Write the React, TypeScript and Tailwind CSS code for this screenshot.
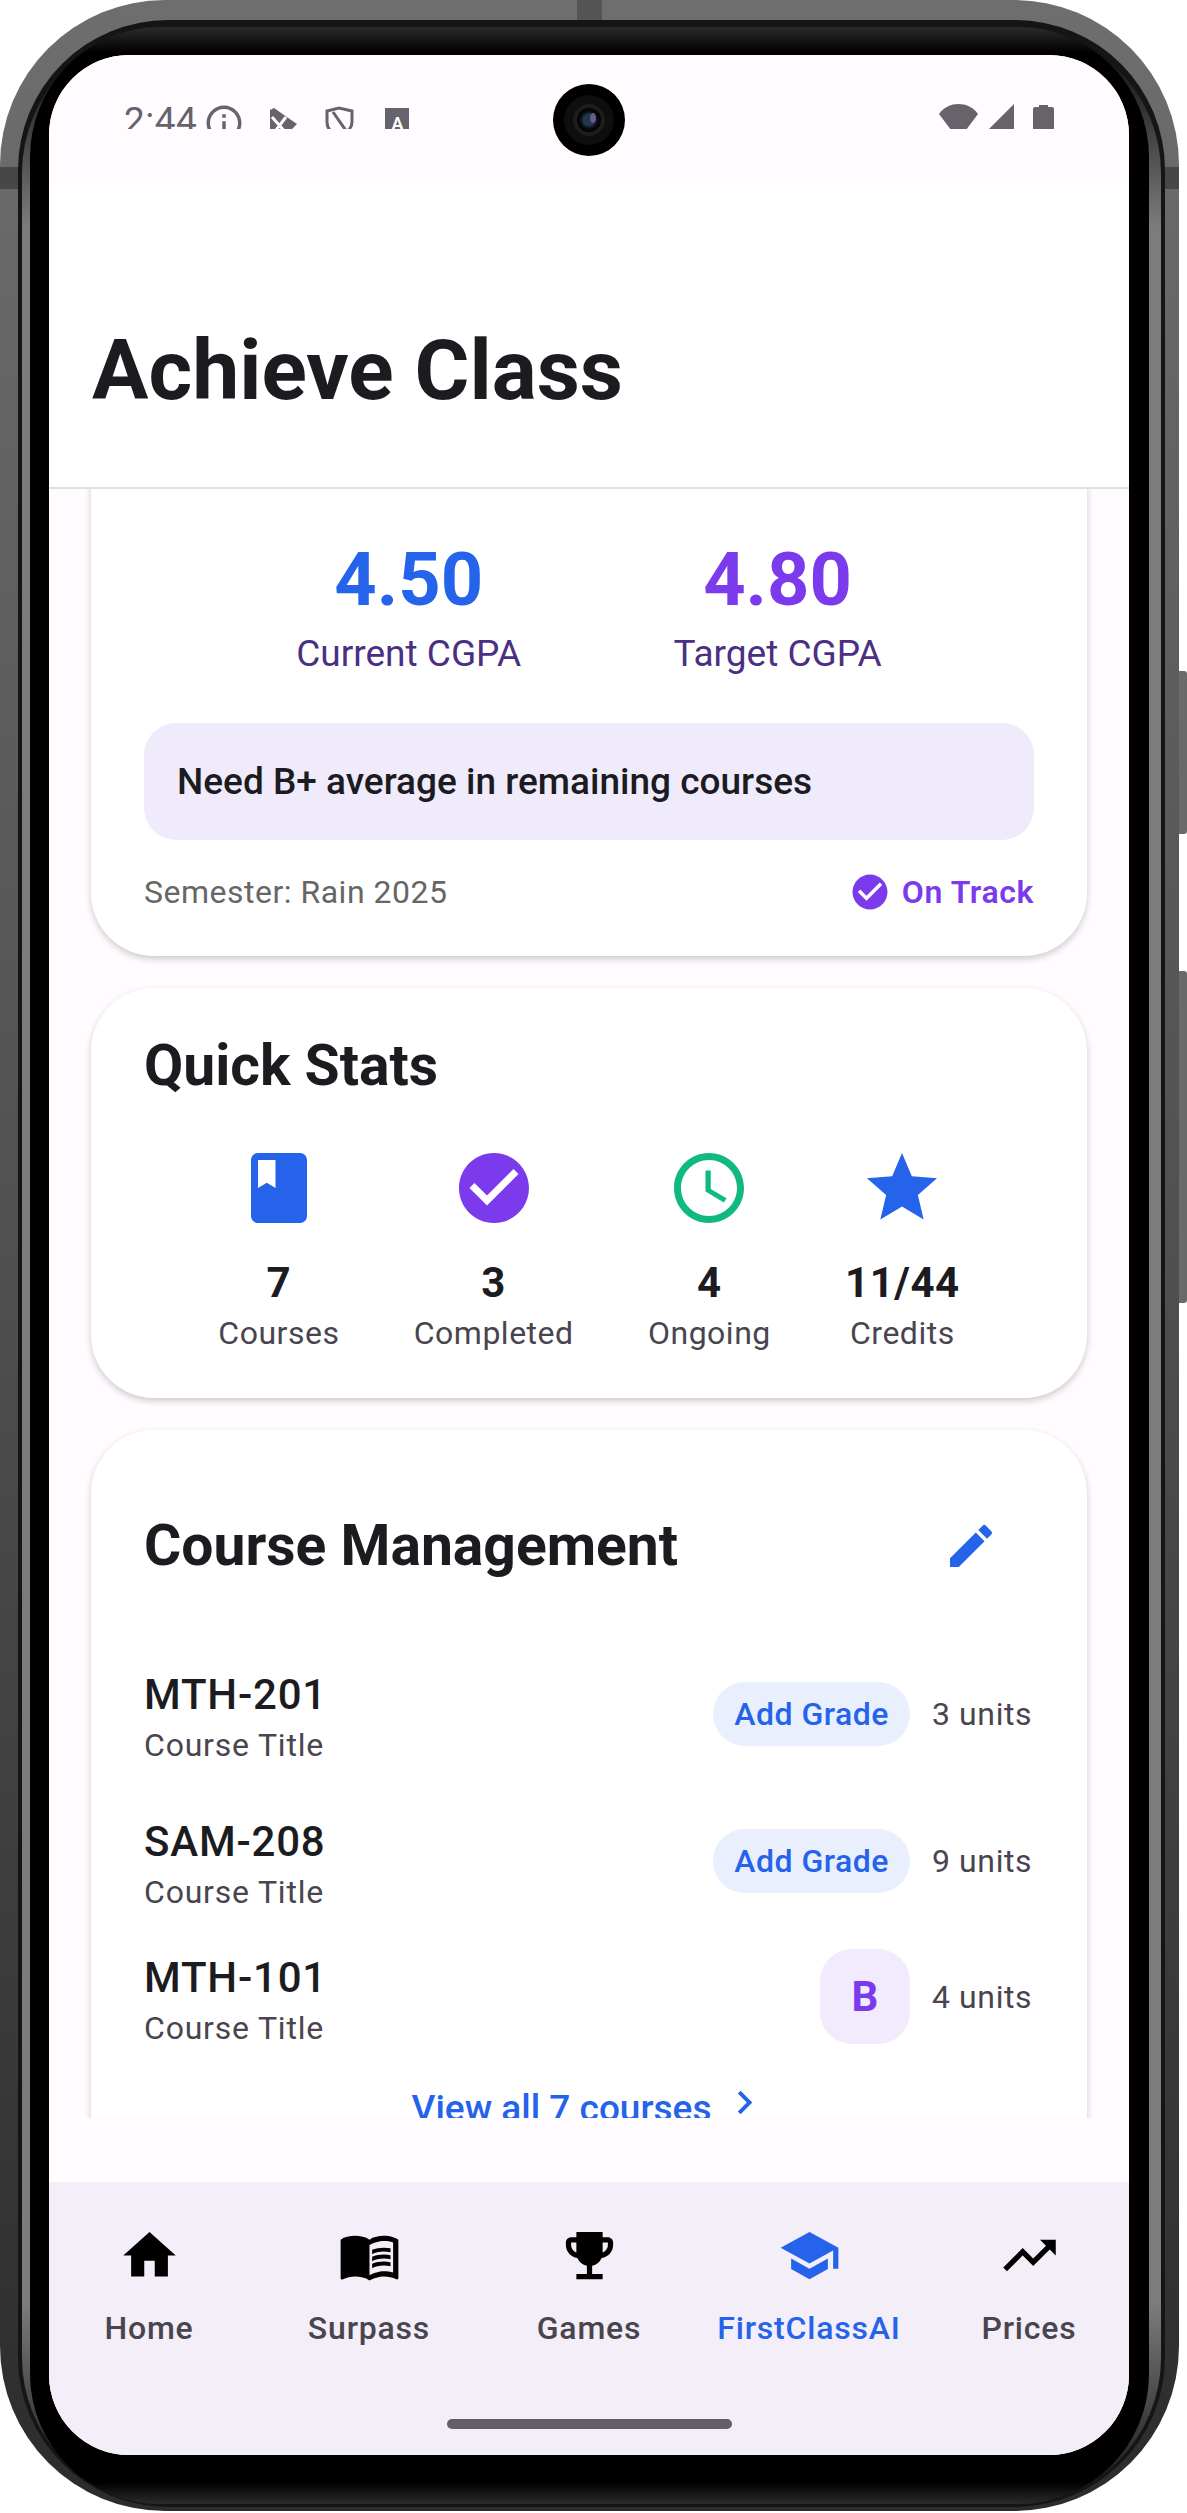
import { MdAccessTime, MdBook, MdCheckCircle, MdChevronRight, MdEdit, MdEmojiEvents, MdHome, MdInfoOutline, MdMenuBook, MdSchool, MdStar, MdTrendingUp } from "react-icons/md";

const stats = [
  { icon: <MdBook size={84} className="text-[#2563eb]" />, value: "7", label: "Courses" },
  { icon: <MdCheckCircle size={84} className="text-[#7c3aed]" />, value: "3", label: "Completed" },
  { icon: <MdAccessTime size={84} className="text-[#10b981]" />, value: "4", label: "Ongoing" },
  { icon: <MdStar size={84} className="text-[#2563eb]" />, value: "11/44", label: "Credits" },
];

const navItems = [
  { icon: MdHome, label: "Home" },
  { icon: MdMenuBook, label: "Surpass" },
  { icon: MdEmojiEvents, label: "Games" },
  { icon: MdSchool, label: "FirstClassAI", active: true },
  { icon: MdTrendingUp, label: "Prices" },
];

const StatusBar = () => (
  <div className="relative h-[130px] shrink-0 bg-[#fffbfe]">
    <div className="flex h-[74px] items-start justify-between overflow-hidden pl-[75px] pr-[75px] pt-[49px]">
      <div className="flex items-start text-[#66646a]">
        <span className="-mt-[8px] text-[37px] leading-[50px] tracking-[0.5px]">2:44</span>
        <MdInfoOutline size={42} className="-mt-[2px] ml-[6px]" />
        <svg viewBox="0 0 27 27" className="ml-[25px] mt-[4px] h-[27px] w-[27px]">
          <path d="M0 2l4-2 10 7 13 9-11 11H0z" fill="currentColor" />
          <path d="M2 9l15 17M16 9L3 26" stroke="#fffbfe" strokeWidth="3" fill="none" />
        </svg>
        <svg viewBox="0 0 29 30" className="ml-[28px] mt-[2px] h-[30px] w-[29px]" fill="none" stroke="currentColor" strokeWidth="3">
          <path d="M2 5l12-3 13 3v11c0 6-5 11-13 13C6 27 2 22 2 16zM8 6l14 20" />
        </svg>
        <span className="ml-[31px] mt-[4px] flex h-[30px] w-[24px] items-start justify-center bg-[#66646a] pt-[5px] text-[17px] font-bold leading-[20px] text-white">
          A
        </span>
      </div>
      <div className="flex items-start text-[#66646a]">
        <svg viewBox="0 0 39 32" className="h-[32px] w-[39px]" fill="currentColor">
          <path d="M0 10C5 3 12 0 19.500 0S34 3 39 10L19.500 36z" />
        </svg>
        <svg viewBox="0 0 25 25" className="ml-[11px] h-[25px] w-[25px]" fill="currentColor">
          <path d="M25 0v25H0z" />
        </svg>
        <svg viewBox="0 0 21 25" className="ml-[19px] h-[25px] w-[21px]" fill="currentColor">
          <path d="M6 3V1h9v2h4a2 2 0 0 1 2 2v20H0V5a2 2 0 0 1 2-2z" />
        </svg>
      </div>
    </div>
    <svg viewBox="0 0 72 72" className="absolute left-[504px] top-[29px] h-[72px] w-[72px]">
      <defs>
        <radialGradient id="lens" cx="50%" cy="50%" r="50%">
          <stop offset="0%" stopColor="#2a2f4a" />
          <stop offset="45%" stopColor="#1d3a50" />
          <stop offset="70%" stopColor="#0b0b10" />
          <stop offset="100%" stopColor="#000000" />
        </radialGradient>
      </defs>
      <circle cx="36" cy="36" r="36" fill="#000000" />
      <circle cx="36" cy="36" r="25" fill="#0e0e0f" />
      <circle cx="36" cy="36" r="16" fill="#1d1d1f" />
      <circle cx="36" cy="36" r="12" fill="url(#lens)" />
      <ellipse cx="40" cy="34" rx="3" ry="5" fill="#6c5a8c" />
    </svg>
  </div>
);

const Header = () => (
  <div className="flex h-[304px] shrink-0 items-start border-b-2 border-[#e0dfe6] bg-white pl-[43px] pt-[136px]">
    <h1 className="text-[84px] font-bold leading-[100px] text-[#1c1b1f]">Achieve Class</h1>
  </div>
);

const CgpaCard = () => (
  <div className="-mt-[60px] shrink-0 rounded-[63px] bg-white px-[53px] pb-[43px] pt-[103px] shadow-[0_3px_7px_rgba(0,0,0,0.2)]">
    <div className="flex justify-evenly">
      <div className="flex flex-col items-center">
        <span className="text-[74px] font-bold leading-[96px] text-[#2563eb]">4.50</span>
        <span className="mt-[1px] text-[37px] leading-[50px] text-[#4a2f82]">Current CGPA</span>
      </div>
      <div className="flex flex-col items-center">
        <span className="text-[74px] font-bold leading-[96px] text-[#7c3aed]">4.80</span>
        <span className="mt-[1px] text-[37px] leading-[50px] text-[#4a2f82]">Target CGPA</span>
      </div>
    </div>
    <div className="mt-[44px] flex h-[117px] items-center rounded-[32px] bg-[#f0ebfb] px-[33px]">
      <span className="text-[37px] font-medium text-[#1c1b1f]">Need B+ average in remaining courses</span>
    </div>
    <div className="mt-[31px] flex h-[42px] items-center justify-between">
      <span className="text-[32px] tracking-[0.5px] text-[#666666]">Semester: Rain 2025</span>
      <div className="flex items-center gap-[11px] text-[#7c3aed]">
        <MdCheckCircle size={42} />
        <span className="text-[32px] font-semibold tracking-[0.6px]">On Track</span>
      </div>
    </div>
  </div>
);

const QuickStats = () => (
  <div className="shrink-0 rounded-[63px] bg-white px-[53px] pb-[44px] pt-[53px] shadow-[0_3px_7px_rgba(0,0,0,0.2)]">
    <h2 className="text-[57px] font-bold leading-[50px] text-[#1c1b1f]">Quick Stats</h2>
    <div className="mt-[55px] flex justify-evenly">
      {stats.map((stat) => (
        <div key={stat.label} className="flex flex-col items-center">
          {stat.icon}
          <span className="mt-[28px] text-[42px] font-bold leading-[50px] tracking-[0.5px] text-[#1c1b1f]">{stat.value}</span>
          <span className="mt-[4px] text-[32px] leading-[42px] tracking-[0.5px] text-[#49454f]">{stat.label}</span>
        </div>
      ))}
    </div>
  </div>
);

const CourseRow = ({ code, units, grade, className }: { code: string; units: string; grade?: string; className: string }) => (
  <div className={`flex h-[99px] items-center justify-between ${className}`}>
    <div className="flex flex-col">
      <span className="mt-[2px] text-[42px] font-medium leading-[52px] tracking-[0.8px] text-[#1c1b1f]">{code}</span>
      <span className="mt-[3px] text-[32px] leading-[42px] tracking-[0.8px] text-[#49454f]">Course Title</span>
    </div>
    <div className="mb-[6px] flex items-center gap-[22px]">
      {grade ? (
        <span className="flex h-[95px] w-[90px] items-center justify-center rounded-[32px] bg-[#f1ebfd] text-[42px] font-bold text-[#7c3aed]">
          {grade}
        </span>
      ) : (
        <span className="flex h-[64px] items-center rounded-full bg-[#e9effd] px-[21px] text-[32px] font-medium tracking-[0.5px] text-[#2563eb]">
          Add Grade
        </span>
      )}
      <span className="w-[102px] text-[32px] tracking-[0.6px] text-[#49454f]">{units}</span>
    </div>
  </div>
);

const CourseCard = () => (
  <div className="shrink-0 rounded-[63px] bg-white px-[53px] pb-[53px] pt-[53px] shadow-[0_3px_7px_rgba(0,0,0,0.2)]">
    <div className="flex h-[126px] items-center justify-between">
      <h2 className="text-[57px] font-bold text-[#1c1b1f]">Course Management</h2>
      <div className="flex h-[126px] w-[126px] items-center justify-center">
        <MdEdit size={56} className="text-[#2563eb]" />
      </div>
    </div>
    <CourseRow className="mt-[58px]" code="MTH-201" units="3 units" />
    <CourseRow className="mt-[48px]" code="SAM-208" units="9 units" />
    <CourseRow className="mt-[37px]" code="MTH-101" units="4 units" grade="B" />
    <div className="mt-[35px] flex h-[50px] items-center justify-center text-[#2563eb]">
      <span className="ml-[2px] text-[37px] font-medium">View all 7 courses</span>
      <MdChevronRight size={47} className="-mt-[14px] ml-[10px]" />
    </div>
  </div>
);

const BottomNav = () => (
  <div className="flex h-[273px] shrink-0 flex-col bg-[#f3eef7] pt-[42px]">
    <div className="-mx-[10px] grid grid-cols-5">
      {navItems.map((item) => (
        <div key={item.label} className="flex flex-col items-center">
          <item.icon size={63} className={item.active ? "text-[#2563eb]" : "text-black"} />
          <span className={`mt-[21px] text-[32px] font-medium leading-[40px] tracking-[0.8px] ${item.active ? "text-[#2563eb]" : "text-[#49454f]"}`}>
            {item.label}
          </span>
        </div>
      ))}
    </div>
    <div className="mt-[71px] h-[10px] w-[285px] self-center rounded-full bg-[#625f66]" />
  </div>
);

const App = () => (
  <div className="relative h-[2513px] w-[1187px] overflow-hidden bg-white font-['Roboto',sans-serif]">
    <div className="absolute left-[1179px] top-[671px] h-[163px] w-[8px] rounded-r-[3px] bg-[#6a6a6a]" />
    <div className="absolute left-[1179px] top-[971px] h-[332px] w-[8px] rounded-r-[3px] bg-[#6a6a6a]" />
    <div className="absolute left-[577px] top-0 h-[20px] w-[25px] bg-[#555555]" />
    <div className="h-[2511px] w-[1179px] rounded-[165px] bg-gradient-to-b from-[#6e6e6e] via-[#505050] to-[#2c2c2c] pb-[4px] pl-[18px] pr-[14px] pt-[20px]">
      <div className="h-full rounded-[150px] bg-[#151515] pb-[3px] pl-[4px] pr-[4px] pt-[7px]">
        <div className="h-full rounded-[146px] bg-[linear-gradient(to_bottom,#000_0,#7c7c7c_200px,#7c7c7c_calc(100%-200px),#111_100%)] pl-[8px] pr-[12px]">
          <div className="flex h-full flex-col rounded-[130px] bg-[linear-gradient(to_bottom,#2b2b2b_0,#000_26px,#000_calc(100%-22px),#2b2b2b_100%)] pb-[49px] pl-[19px] pr-[20px] pt-[28px]">
            <div className="relative flex h-[2400px] w-[1080px] flex-col overflow-hidden rounded-[80px] bg-[#fffbfe]">
              <StatusBar />
              <Header />
              <div className="flex h-[1629px] shrink-0 flex-col gap-[32px] overflow-hidden px-[42px]">
                <CgpaCard />
                <QuickStats />
                <CourseCard />
              </div>
              <div className="h-[64px] shrink-0 bg-[#fffbfe]" />
              <BottomNav />
            </div>
          </div>
        </div>
      </div>
    </div>
    <div className="absolute left-0 top-[167px] h-[22px] w-[18px] bg-[#474747]" />
    <div className="absolute left-[1165px] top-[167px] h-[22px] w-[14px] bg-[#474747]" />
  </div>
);

export default App;
